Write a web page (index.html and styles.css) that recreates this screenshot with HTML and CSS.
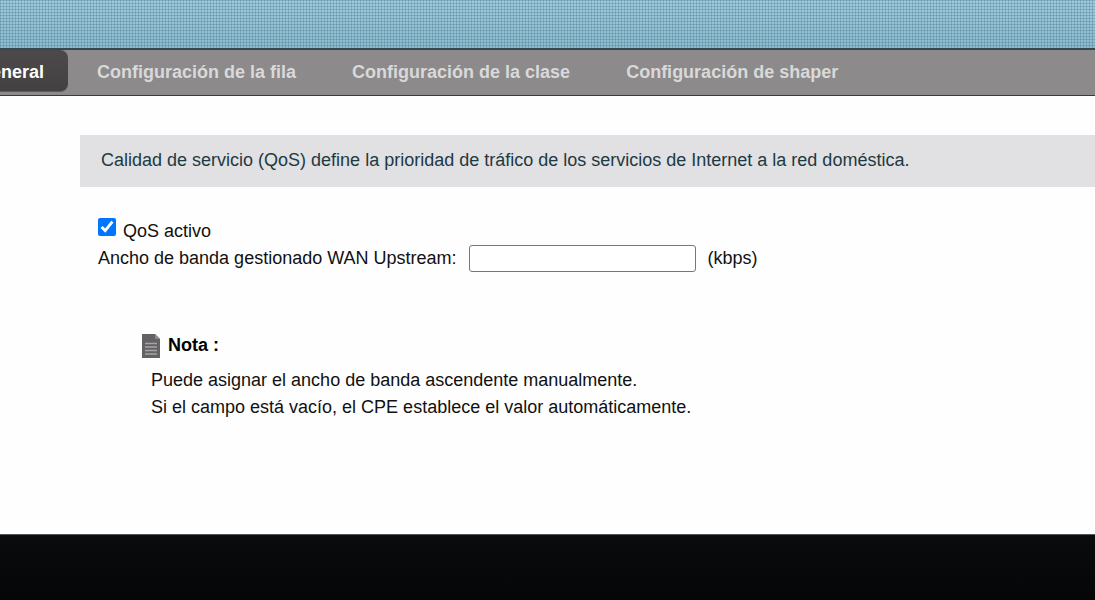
FILE: index.html
```html
<!DOCTYPE html>
<html lang="es">

<head>
    <meta charset="UTF-8">
    <meta name="viewport" content="width=device-width, initial-scale=1.0">
    <title>QoS</title>
    <link rel="stylesheet" href="styles.css">
</head>

<body>
    <header class="banner"></header>
    <nav class="tabs">
        <a class="active" href="#">General</a>
        <a href="#">Configuración de la fila</a>
        <a href="#">Configuración de la clase</a>
        <a href="#">Configuración de shaper</a>
    </nav>
    <main class="content">
        <p class="intro">Calidad de servicio (QoS) define la prioridad de tráfico de los servicios de Internet a la red doméstica.</p>
        <form class="settings">
            <div class="row check">
                <input type="checkbox" id="qosActive" checked>
                <label for="qosActive">QoS activo</label>
            </div>
            <div class="row">
                <label for="bandwidth">Ancho de banda gestionado WAN Upstream:</label>
                <input type="text" id="bandwidth">
                <span>(kbps)</span>
            </div>
        </form>
        <section class="note">
            <h2>
                <svg width="20" height="26" viewBox="0 0 20 26" aria-hidden="true">
                    <path d="M1 1h13l5 5v19H1z" fill="#636163"/>
                    <path d="M14 1v5h5z" fill="#8d8b8d"/>
                    <path d="M4 10.500h12M4 14h12M4 17.500h12M4 21h12" stroke="#a6a4a6" stroke-width="1.500"/>
                </svg>
                Nota :
            </h2>
            <p>Puede asignar el ancho de banda ascendente manualmente.</p>
            <p>Si el campo está vacío, el CPE establece el valor automáticamente.</p>
        </section>
    </main>
    <footer class="bottom"></footer>
</body>

</html>
```

FILE: styles.css
```css
body {
    margin: 0;
    min-height: 100vh;
    display: flex;
    flex-direction: column;
    overflow-x: hidden;
    background: #fefefe;
    color: #111;
    font-family: "Liberation Sans", Arial, sans-serif;
    font-size: 18px;
    line-height: 27px;
}
p, h2 {
    margin: 0;
}

/*--------------------------*/
.banner {
    height: 48px;
    border-bottom: 2px solid #36474f;
    background:
        repeating-linear-gradient(to right, rgba(55, 105, 130, .28) 0 1px, transparent 1px 3px),
        repeating-linear-gradient(to bottom, rgba(55, 105, 130, .28) 0 1px, transparent 1px 3px),
        linear-gradient(to bottom, #9fcadb, #8dbbce);
}

.tabs {
    display: flex;
    align-items: flex-start;
    height: 45px;
    margin-left: -47px;
    border-bottom: 1px solid #3c3a3b;
    background: #8c8a8b;
}
.tabs a {
    padding: 9px 28px 6px;
    color: #dad9da;
    font-weight: bold;
    text-decoration: none;
    white-space: nowrap;
}
.tabs .active {
    margin-right: 1px;
    padding: 9px 24px 5px;
    color: #fff;
    background: linear-gradient(to bottom, #4b494a, #434142);
    border-bottom: 1px solid #5c5a5b;
    border-radius: 0 8px 8px 0;
}

/*--------------------------*/
.content {
    padding: 39px 0 113px 80px;
}
.intro {
    padding: 12px 21px 13px;
    background: #e1e0e2;
    color: #1d3a42;
}
.settings {
    padding: 31px 18px 0;
}
.row {
    display: flex;
    align-items: center;
    gap: 12px;
}
.row input {
    margin: 0;
}
.check {
    align-items: flex-start;
    gap: 7px;
}
.check input {
    width: 18px;
    height: 18px;
}
.row input[type="text"] {
    width: 227px;
    height: 27px;
    box-sizing: border-box;
    border: 1px solid #767676;
    border-radius: 3px;
    background: #fff;
    font: inherit;
}

.note {
    padding: 60px 0 0 71px;
}
.note h2 {
    display: flex;
    align-items: center;
    gap: 7px;
    margin: 0 0 8px -10px;
    color: #000;
    font-size: 18px;
}

.bottom {
    flex: 1;
    min-height: 64px;
    border-top: 1px solid #555;
    background: linear-gradient(to bottom, #0a0b0c, #050608);
}
```
